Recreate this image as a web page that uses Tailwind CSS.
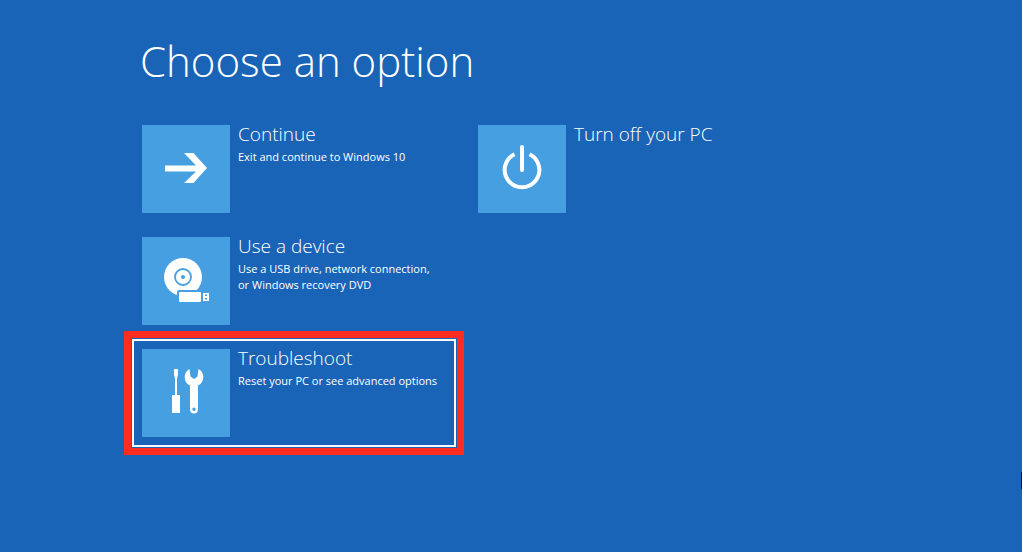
<!DOCTYPE html>
<html lang="en">

<head>
  <meta charset="UTF-8" />
  <meta name="viewport" content="width=device-width, initial-scale=1.0" />
  <title>Choose an option</title>
  <script src="https://cdn.jsdelivr.net/npm/@tailwindcss/browser@4"></script>
</head>

<body class="relative min-h-screen bg-[#1a64b7] text-white font-['Open_Sans','Noto_Sans',sans-serif]">

  <main class="pl-[132px] pt-8 pb-8">
    <h1 class="pl-2 text-[42px] leading-[58px] font-light">Choose an option</h1>

    <div class="mt-[25px] flex flex-wrap items-start gap-3">
      <!-- First column -->
      <div class="flex w-[324px] flex-col gap-1">
        <button type="button" class="flex items-start gap-2 border-2 border-transparent p-2 text-left">
          <span class="size-[88px] shrink-0 bg-[#469fe1]">
            <svg viewBox="0 0 88 88" fill="#fff" aria-hidden="true">
              <path d="M23 40.5H54L42 28H51.5L65 43L51.5 58H42L54 46.5H23Z" />
            </svg>
          </span>
          <span class="-mt-1">
            <span class="block text-[19px] leading-[26px] font-light">Continue</span>
            <span class="mt-0.5 block text-[11px] leading-4">Exit and continue to Windows 10</span>
          </span>
        </button>

        <button type="button" class="flex items-start gap-2 border-2 border-transparent p-2 text-left">
          <span class="size-[88px] shrink-0 bg-[#469fe1]">
            <svg viewBox="0 0 88 88" fill="#fff" aria-hidden="true">
              <circle cx="41" cy="40" r="19" />
              <circle cx="41" cy="40" r="8" fill="none" stroke="#469fe1" stroke-width="1.8" />
              <circle cx="41" cy="40" r="2" fill="#469fe1" />
              <rect x="35" y="53" width="26" height="14" rx="2" fill="#469fe1" />
              <rect x="37" y="55" width="22" height="10" rx="1" />
              <path fill-rule="evenodd" d="M61 56h6v8h-6zM63 57.5v1.5h2v-1.5zM63 61v1.5h2V61z" />
            </svg>
          </span>
          <span class="-mt-1">
            <span class="block text-[19px] leading-[26px] font-light">Use a device</span>
            <span class="mt-0.5 block text-[11px] leading-4">Use a USB drive, network connection,<br />or Windows recovery DVD</span>
          </span>
        </button>

        <!-- Highlighted option -->
        <button type="button" class="flex items-start gap-2 border-2 border-white p-2 text-left outline-7 outline-offset-1 outline-[#fe2d20]">
          <span class="size-[88px] shrink-0 bg-[#469fe1]">
            <svg viewBox="0 0 88 88" fill="#fff" aria-hidden="true">
              <path d="M32 20H36V26L35 29V46H38V64H30V46H33V29L32 26Z" />
              <path fill-rule="evenodd" d="M47.5 20A9.3 9.3 0 0 0 48 36.5V60.5a4 4 0 0 0 8 0V36.5A9.3 9.3 0 0 0 56.5 20L55.5 27.5L52 30L48.5 27.5ZM52 58.5a1.7 1.7 0 1 1 0 3.4a1.7 1.7 0 0 1 0-3.4Z" />
            </svg>
          </span>
          <span class="-mt-1">
            <span class="block text-[19px] leading-[26px] font-light">Troubleshoot</span>
            <span class="mt-0.5 block text-[11px] leading-4">Reset your PC or see advanced options</span>
          </span>
        </button>
      </div>

      <!-- Second column -->
      <div class="flex w-[324px] flex-col gap-1">
        <button type="button" class="flex items-start gap-2 border-2 border-transparent p-2 text-left">
          <span class="size-[88px] shrink-0 bg-[#469fe1]">
            <svg viewBox="0 0 88 88" fill="none" stroke="#fff" stroke-width="4" aria-hidden="true">
              <path d="M36.5 29.3A17.3 17.3 0 1 0 51.5 29.3" />
              <path d="M44 22V45" stroke-linecap="round" />
            </svg>
          </span>
          <span class="-mt-1">
            <span class="block text-[19px] leading-[26px] font-light">Turn off your PC</span>
          </span>
        </button>
      </div>
    </div>
  </main>

  <!-- Mark on the right screen edge -->
  <div class="absolute right-0 top-[472px] h-[17px] w-px bg-[#04103a]"></div>

</body>

</html>
